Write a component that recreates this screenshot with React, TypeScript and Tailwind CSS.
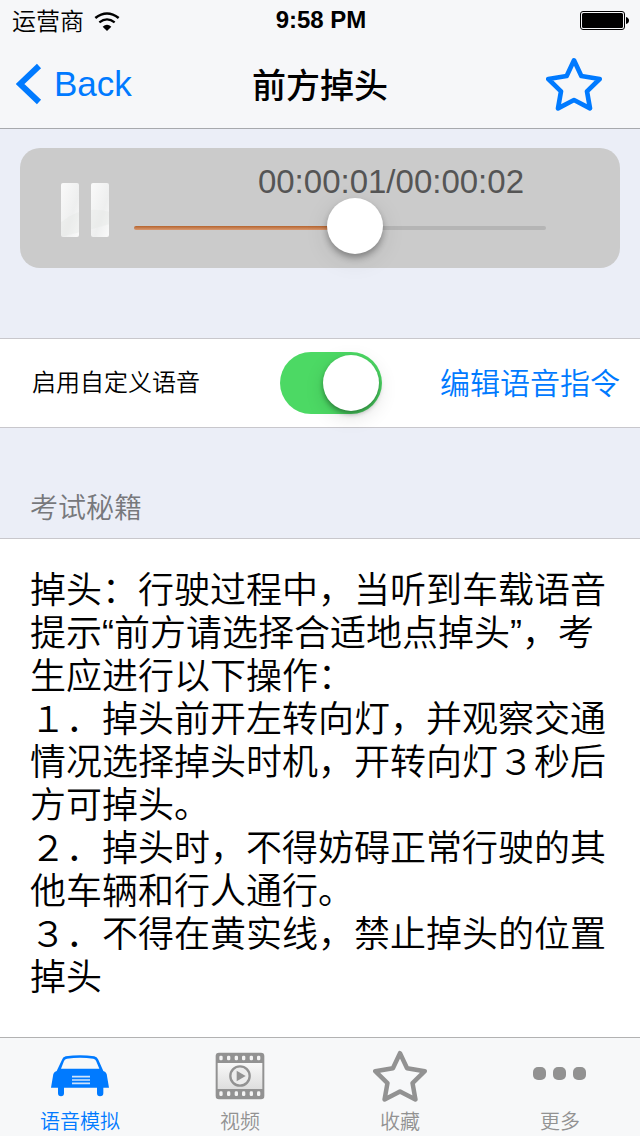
import React, { useState } from 'react';

const TIPS = [
  '掉头：行驶过程中，当听到车载语音提示“前方请选择合适地点掉头”，考生应进行以下操作：',
  '１．掉头前开左转向灯，并观察交通情况选择掉头时机，开转向灯３秒后方可掉头。',
  '２．掉头时，不得妨碍正常行驶的其他车辆和行人通行。',
  '３．不得在黄实线，禁止掉头的位置掉头',
];

const WifiIcon: React.FC = () => (
  <svg width="26" height="20" viewBox="0 0 78 60" fill="none" aria-hidden="true">
    <path d="M4 18 Q39 -9 74 18" stroke="#000" strokeWidth="8" />
    <path d="M16 31 Q39 13 62 31" stroke="#000" strokeWidth="7" />
    <path d="M26 44 Q39 32 52 44 L39 57 Z" fill="#000" />
  </svg>
);

const BatteryIcon: React.FC = () => (
  <svg width="50" height="20" viewBox="0 0 50 20" fill="none" aria-hidden="true">
    <rect x="0.5" y="1.5" width="44" height="18" rx="2.5" stroke="#000" />
    <rect x="2" y="3" width="41" height="15" rx="1.5" fill="#000" />
    <path d="M46 7 Q49 8 49 10.5 Q49 13 46 14 Z" fill="#000" />
  </svg>
);

const StarIcon: React.FC<{ size: number }> = ({ size }) => (
  <svg width={size} height={size} viewBox="0 0 168 168" fill="none" aria-hidden="true">
    <path
      d="M84 13 L106 60 L161 69 L123 106 L132 157 L84 132 L36 157 L45 106 L7 69 L62 60 Z"
      stroke="currentColor"
      strokeWidth="14"
      strokeLinejoin="round"
    />
  </svg>
);

const PauseIcon: React.FC = () => (
  <svg width="50" height="56" viewBox="0 0 50 56" aria-hidden="true">
    <defs>
      <linearGradient id="bar" x1="0" y1="0" x2="1" y2="1">
        <stop offset="0" stopColor="#fafafa" />
        <stop offset="0.6" stopColor="#eeefef" />
        <stop offset="1" stopColor="#fafafa" />
      </linearGradient>
      <clipPath id="bars">
        <rect x="1" y="1" width="18" height="54" rx="2" />
        <rect x="31" y="1" width="18" height="54" rx="2" />
      </clipPath>
    </defs>
    <rect x="1" y="1" width="18" height="54" rx="2" fill="url(#bar)" />
    <rect x="31" y="1" width="18" height="54" rx="2" fill="url(#bar)" />
    <path d="M0 41 Q22 22 50 30 L50 42 Q30 48 0 55 Z" fill="#e0e4e2" opacity="0.3" clipPath="url(#bars)" />
  </svg>
);

const CarIcon: React.FC = () => (
  <svg width="60" height="44" viewBox="0 0 180 132" aria-hidden="true">
    <path
      fill="currentColor"
      fillRule="evenodd"
      d="M36 17 Q38 9 47 7 Q90 1 133 7 Q142 9 145 17 L160 51 Q167 52 170 60 L177 101 L160 101 L160 118 Q160 127 150 127 Q141 127 141 118 L141 101 L42 101 L42 118 Q42 127 33 127 Q24 127 24 118 L24 101 L3 101 L10 60 Q13 52 20 51 Z M51 14 Q44 15 42 21 L33 44 L148 44 L138 20 Q136 15 130 14 Q90 9 51 14 Z"
    />
    <path d="M66 68 H120 M66 78 H120 M66 88 H120" stroke="#cfe3fa" strokeWidth="5" />
  </svg>
);

const FilmIcon: React.FC = () => (
  <svg width="50" height="48" viewBox="0 0 150 144" aria-hidden="true">
    <defs>
      <linearGradient id="frame" x1="0" y1="0" x2="0" y2="1">
        <stop offset="0" stopColor="#f8f8f8" />
        <stop offset="1" stopColor="#dedede" />
      </linearGradient>
    </defs>
    <rect x="2" y="2" width="146" height="140" rx="10" fill="currentColor" />
    <rect x="8" y="33" width="134" height="78" fill="url(#frame)" />
    {[18, 41, 64, 86, 109, 131].map((x) => (
      <g key={x} fill="#f4f4f4">
        <rect x={x - 5} y="11" width="10" height="14" rx="4" />
        <rect x={x - 5} y="118" width="10" height="14" rx="4" />
      </g>
    ))}
    <circle cx="75" cy="72" r="29" fill="#ececec" stroke="currentColor" strokeWidth="7" />
    <path d="M65 56 L92 72 L65 88 Z" fill="currentColor" />
  </svg>
);

const MoreIcon: React.FC = () => (
  <svg width="56" height="18" viewBox="0 0 56 18" fill="currentColor" aria-hidden="true">
    <rect x="1" y="0" width="13" height="13" rx="5" />
    <rect x="21" y="0" width="13" height="13" rx="5" />
    <rect x="41" y="0" width="13" height="13" rx="5" />
  </svg>
);

const TABS = [
  { id: 'voice', label: '语音模拟', icon: <CarIcon /> },
  { id: 'video', label: '视频', icon: <FilmIcon /> },
  { id: 'favorites', label: '收藏', icon: <StarIcon size={54} /> },
  { id: 'more', label: '更多', icon: <MoreIcon /> },
];

const Header: React.FC = () => (
  <header className="border-b border-[#a7a9ad] bg-[#f6f7f9]">
    {/* Status bar */}
    <div className="grid h-10 grid-cols-3 items-center pl-3 pr-2.5 text-[24px] leading-9">
      <div className="flex items-center gap-2.5 pt-1">
        <span>运营商</span>
        <WifiIcon />
      </div>
      <span className="text-center font-bold">9:58 PM</span>
      <div className="flex justify-end">
        <BatteryIcon />
      </div>
    </div>

    {/* Navigation bar */}
    <div className="grid h-22 grid-cols-3 items-center px-4">
      <a href="#back" className="flex items-center gap-3 text-[35px] text-[#007aff]">
        <svg width="26" height="42" viewBox="0 0 26 42" fill="none" aria-hidden="true">
          <path d="M23 3 L4 21 L23 39" stroke="currentColor" strokeWidth="6" />
        </svg>
        Back
      </a>
      <h1 className="pt-1 text-center text-[34px] font-medium">前方掉头</h1>
      <button type="button" aria-label="收藏" className="mr-[22px] justify-self-end text-[#007aff]">
        <StarIcon size={56} />
      </button>
    </div>
  </header>
);

const Player: React.FC = () => {
  const [position, setPosition] = useState(542);

  return (
    <section className="mx-5 mt-[19px] flex items-center rounded-[20px] bg-[#cbcbcb] pl-10 pr-[74px]">
      <button type="button" aria-label="暂停" className="mt-1 shrink-0">
        <PauseIcon />
      </button>
      <div className="ml-6 flex min-w-0 flex-1 flex-col gap-0.5 pt-3.5 pb-4">
        <label htmlFor="progress" className="pr-[22px] text-right text-[33px] leading-10 text-[#555]">
          00:00:01/00:00:02
        </label>
        <input
          id="progress"
          type="range"
          min={0}
          max={1000}
          value={position}
          onChange={(e) => setPosition(Number(e.target.value))}
          style={{ '--fill': `${position / 10}%` } as React.CSSProperties}
          className="h-12 w-full appearance-none bg-transparent [&::-webkit-slider-runnable-track]:h-1 [&::-webkit-slider-runnable-track]:rounded-full [&::-webkit-slider-runnable-track]:[background:linear-gradient(to_bottom,#b5642e,#d99a72)_0_0/var(--fill)_100%_no-repeat,#b5b5b5] [&::-webkit-slider-thumb]:-mt-7 [&::-webkit-slider-thumb]:size-14 [&::-webkit-slider-thumb]:appearance-none [&::-webkit-slider-thumb]:rounded-full [&::-webkit-slider-thumb]:bg-white [&::-webkit-slider-thumb]:shadow-[0_4px_6px_rgba(0,0,0,0.3),0_6px_24px_rgba(0,0,0,0.1)]"
        />
      </div>
    </section>
  );
};

const VoiceSetting: React.FC = () => {
  const [enabled, setEnabled] = useState(true);

  return (
    <section className="mt-[70px] flex h-[90px] items-center justify-between border-y border-[#c8c7cc] bg-white pl-8 pr-5">
      <label htmlFor="custom-voice" className="text-[24px]">
        启用自定义语音
      </label>
      <input
        id="custom-voice"
        type="checkbox"
        role="switch"
        checked={enabled}
        onChange={(e) => setEnabled(e.target.checked)}
        className="flex h-[62px] w-[102px] appearance-none items-center rounded-full bg-gray-200 px-[3px] before:size-14 before:rounded-full before:bg-white before:shadow-[0_3px_5px_rgba(0,0,0,0.35),0_6px_20px_rgba(0,0,0,0.12)] checked:justify-end checked:bg-[#4cd964]"
      />
      <button type="button" className="ml-[-22px] text-[30px] text-[#007aff]">
        编辑语音指令
      </button>
    </section>
  );
};

const TabBar: React.FC = () => {
  const [active, setActive] = useState('voice');

  return (
    <nav className="grid grid-cols-4 border-t border-[#b2b2b2] bg-[#f7f8f9]">
      {TABS.map((tab) => (
        <button
          key={tab.id}
          type="button"
          onClick={() => setActive(tab.id)}
          className={`flex h-[98px] flex-col items-center ${active === tab.id ? 'text-[#007aff]' : 'text-[#929292]'}`}
        >
          <span className="flex h-[76px] items-center justify-center">{tab.icon}</span>
          <span className="text-[20px] leading-4">{tab.label}</span>
        </button>
      ))}
    </nav>
  );
};

export default function App() {
  return (
    <div className="flex min-h-screen flex-col bg-[#ebeef7] font-['Liberation_Sans','Noto_Sans_CJK_SC',sans-serif] font-[350] text-black">
      <Header />
      <main className="flex flex-1 flex-col">
        <Player />
        <VoiceSetting />
        <h2 className="px-[30px] pt-[60px] pb-2 text-[28px] leading-[42px] text-[#77787c]">考试秘籍</h2>
        <section className="flex-1 border-t border-[#c8c7cc] bg-white px-[30px] pt-[30px] pb-8 text-[36px] leading-[43px]">
          {TIPS.map((tip) => (
            <p key={tip}>{tip}</p>
          ))}
        </section>
      </main>
      <TabBar />
    </div>
  );
}
